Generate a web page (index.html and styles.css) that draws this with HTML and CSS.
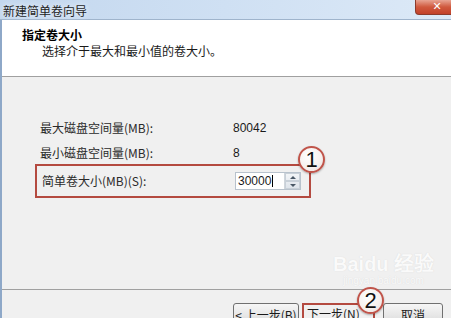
FILE: index.html
```html
<!DOCTYPE html>
<html lang="zh-CN">
<head>
  <meta charset="UTF-8" />
  <title>新建简单卷向导</title>
  <link rel="stylesheet" href="styles.css">
</head>
<body>
  <div class="window">
    <div class="titlebar">
      <span class="title">新建简单卷向导</span>
      <span class="close">✕</span>
    </div>

    <div class="frame">
      <div class="header">
        <div class="head-title">指定卷大小</div>
        <div class="head-sub">选择介于最大和最小值的卷大小。</div>
      </div>

      <div class="content">
        <div class="row">
          <span class="label">最大磁盘空间量(MB):</span>
          <span class="value">80042</span>
        </div>
        <div class="row">
          <span class="label">最小磁盘空间量(MB):</span>
          <span class="value">8</span>
        </div>
        <div class="row mark-box">
          <span class="label">简单卷大小(MB)(S):</span>
          <span class="spin">
            <span class="spin-input">30000<i class="caret"></i></span>
            <span class="spin-btns">
              <span class="arrow up"></span>
              <span class="arrow down"></span>
            </span>
          </span>
          <span class="badge badge-one">1</span>
        </div>

        <div class="watermark">
          <span class="wm-logo">Bai<span class="paw">du</span> 经验</span>
          <span class="wm-url">jingyan.baidu.com</span>
        </div>
      </div>

      <div class="footer">
        <button class="btn btn-back">&lt; 上一步(B)</button>
        <span class="mark-next">
          <button class="btn">下一步(N) &gt;</button>
        </span>
        <button class="btn btn-cancel">取消</button>
        <span class="badge badge-two">2</span>
      </div>
    </div>
  </div>
</body>
</html>
```

FILE: styles.css
```css
* {
  box-sizing: border-box;
}
body {
  margin: 0;
  font-family: "Noto Sans CJK SC", "Liberation Sans", sans-serif;
  font-size: 12px;
  color: #1a1a1a;
  background: #f0f0f0;
}
.window {
  width: 451px;
  height: 318px;
  overflow: hidden;
  display: flex;
  flex-direction: column;
}
.titlebar {
  height: 23px;
  display: flex;
  align-items: flex-start;
  background: linear-gradient(90deg, #c3d7ee 0%, #cfe0f3 50%, #dce9f7 100%);
  border-bottom: 1px solid #9fb4cc;
}
.title {
  margin: 3px 0 0 3px;
  line-height: 16px;
  color: #1e1e1e;
  text-shadow: 0 0 6px #ffffff;
}
.close {
  margin-left: auto;
  margin-right: -8px;
  width: 44px;
  height: 15px;
  line-height: 14px;
  text-align: center;
  color: #ffffff;
  font-family: "DejaVu Sans", sans-serif;
  font-weight: bold;
  font-size: 11px;
  background: linear-gradient(180deg, #e8a493 0%, #d0593e 50%, #c2412a 100%);
  border: 1px solid #8c3b2c;
  border-top: none;
  border-radius: 0 0 4px 4px;
}
.frame {
  flex: 1;
  display: flex;
  flex-direction: column;
  border-left: 2px solid #8ea8c8;
}
.header {
  height: 57px;
  background: #ffffff;
  border-bottom: 1px solid #a0a0a0;
  padding: 7px 0 0 20px;
}
.head-title {
  font-weight: bold;
  line-height: 16px;
  color: #000000;
}
.head-sub {
  line-height: 16px;
  padding-left: 20px;
}
.content {
  position: relative;
  height: 213px;
  padding: 43px 0 0 38px;
  background: #f0f0f0;
  border-bottom: 1px solid #a0a0a0;
}
.row {
  display: grid;
  grid-template-columns: 193px auto;
  align-items: center;
  line-height: 16px;
  margin-bottom: 9px;
}
.label {
  color: #2a2a2a;
}
.value {
  font-family: "Liberation Sans", sans-serif;
}
.mark-box {
  position: relative;
  width: 276px;
  height: 34px;
  margin: -6px 0 0 -5px;
  padding-left: 5px;
  border: 2px solid #b44a40;
}
.spin {
  display: flex;
  height: 18px;
  width: 66px;
  border: 1px solid #b8c2cc;
  background: #ffffff;
}
.spin-input {
  width: 48px;
  padding-left: 2px;
  font-family: "Liberation Sans", sans-serif;
  line-height: 16px;
}
.caret {
  display: inline-block;
  width: 1px;
  height: 12px;
  margin-left: 1px;
  vertical-align: -2px;
  background: #000000;
}
.spin-btns {
  width: 16px;
  display: flex;
  flex-direction: column;
  border-left: 1px solid #d0d6dc;
  background: linear-gradient(180deg, #f4f6f8, #dde3ea);
}
.arrow {
  flex: 1;
  display: flex;
  justify-content: center;
  align-items: center;
  border: 1px solid #c8d0d8;
}
.arrow::after {
  content: "";
  border-left: 3px solid transparent;
  border-right: 3px solid transparent;
}
.up::after {
  border-bottom: 3px solid #4a5866;
}
.down::after {
  border-top: 3px solid #4a5866;
}
.badge {
  position: absolute;
  width: 27px;
  height: 27px;
  border-radius: 50%;
  border: 2px solid #c0544a;
  background: radial-gradient(circle at 40% 35%, #ffffff 0%, #f6f0ee 60%, #e6d8d4 100%);
  box-shadow: 0 1px 2px rgba(0, 0, 0, 0.3);
  font-family: "Liberation Sans", sans-serif;
  font-size: 22px;
  line-height: 23px;
  text-align: center;
  color: #111111;
}
.badge-one {
  right: -16px;
  top: -20px;
}
.watermark {
  position: absolute;
  left: 331px;
  top: 176px;
  display: flex;
  flex-direction: column;
  align-items: center;
  color: #fafafa;
  text-shadow: 0 0 1px #d4d4d4;
}
.wm-logo {
  font-family: "Liberation Sans", sans-serif;
  font-weight: bold;
  font-size: 20px;
  line-height: 22px;
}
.wm-url {
  font-family: "Liberation Sans", sans-serif;
  font-size: 10px;
  line-height: 12px;
}
.footer {
  position: relative;
  flex: 1;
  display: flex;
  align-items: flex-start;
  padding: 13px 0 0 231px;
  background: #f0f0f0;
}
.btn {
  height: 23px;
  padding: 0;
  font-family: "Noto Sans CJK SC", sans-serif;
  font-size: 12px;
  line-height: 18px;
  color: #1a1a1a;
  background: linear-gradient(180deg, #f6f6f6 0%, #e8e8e8 50%, #d8d8d8 100%);
  border: 1px solid #707070;
  border-radius: 3px;
}
.btn-back {
  width: 66px;
}
.mark-next {
  margin-left: 3px;
  border: 2px solid #b44a40;
  height: 26px;
  padding-left: 1px;
  width: 73px;
}
.mark-next .btn {
  width: 60px;
  border: none;
  background: transparent;
  text-align: left;
  padding-left: 2px;
}
.btn-cancel {
  width: 60px;
  margin-left: 8px;
}
.badge-two {
  left: 355px;
  top: -3px;
}
```
